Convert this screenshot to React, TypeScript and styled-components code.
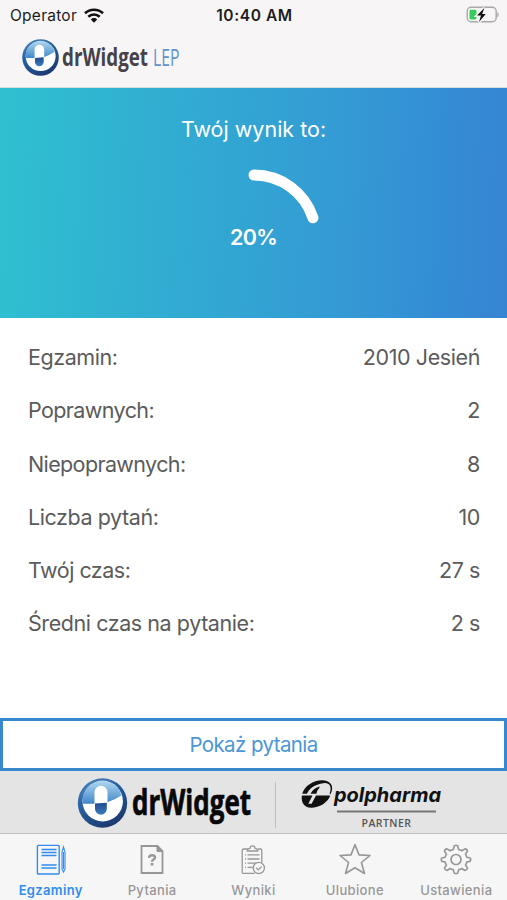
import React from "react";
import styled, { createGlobalStyle } from "styled-components";

const GlobalStyle = createGlobalStyle`
  * { box-sizing: border-box; }
  body { margin: 0; background: #fff; font-family: Inter, "Noto Sans", sans-serif; }
`;

const Screen = styled.main`
  width: 507px;
  height: 900px;
  display: flex;
  flex-direction: column;
  overflow: hidden;
  background: #fff;
`;

const Header = styled.header`
  height: 88px;
  flex: none;
  background: #f7f5f6;
  border-bottom: 1px solid #d5dde0;
`;

const StatusBar = styled.div`
  height: 30px;
  display: grid;
  grid-template-columns: 1fr auto 1fr;
  align-items: center;
  padding: 0 8px 0 10px;
  font-size: 15.5px;
  color: #1c1c1c;
`;

const Carrier = styled.div`
  display: flex;
  align-items: center;
  gap: 7px;
  letter-spacing: 0.25px;
`;

const Clock = styled.div`
  font-weight: 600;
  letter-spacing: 0.6px;
`;

const BatterySlot = styled.div`
  display: flex;
  justify-content: flex-end;
`;

const HeaderLogo = styled.div`
  padding: 5px 0 0 20px;
  svg { display: block; }
`;

const ScorePanel = styled.section`
  height: 230px;
  flex: none;
  display: flex;
  flex-direction: column;
  align-items: center;
  padding-top: 26px;
  background: linear-gradient(93deg, #2fc0d0 0%, #31add2 32%, #349bd4 66%, #348cd4 88%, #3685d2 100%);
  color: #fff;
`;

const ScoreTitle = styled.h1`
  margin: 0;
  font-size: 21.5px;
  line-height: 30px;
  font-weight: 400;
  letter-spacing: 0;
`;

const Gauge = styled.div`
  margin-top: 23px;
  display: grid;
  place-items: center;
  > * { grid-area: 1 / 1; }
`;

const GaugeValue = styled.span`
  font-size: 21.5px;
  line-height: 26px;
  font-weight: 600;
  letter-spacing: -0.7px;
`;

const Details = styled.dl`
  flex: 1;
  margin: 0;
  padding: 12.4px 27px 0 28px;
`;

const DetailRow = styled.div`
  height: 53.25px;
  display: flex;
  align-items: center;
  justify-content: space-between;
  font-size: 21.5px;
  color: #5b5b5b;
`;

const Label = styled.dt<{ $track: number }>`
  letter-spacing: ${(p) => p.$track}px;
`;

const Value = styled.dd`
  margin: 0;
  letter-spacing: -0.4px;
`;

const ShowButton = styled.button`
  height: 53px;
  flex: none;
  padding: 2px 0 0;
  border: 3px solid #3788cf;
  background: #fff;
  color: #4b96d6;
  font: 400 20.5px/1 Inter, sans-serif;
  letter-spacing: -0.6px;
`;

const Banner = styled.aside`
  height: 63px;
  flex: none;
  display: flex;
  background: #e4e4e4;
  border-bottom: 1px solid #bdbdbd;
  svg { display: block; }
`;

const TabBar = styled.nav`
  height: 66px;
  flex: none;
  display: grid;
  grid-template-columns: repeat(5, 1fr);
  background: #f7f6f7;
`;

const Tab = styled.a<{ $active?: boolean }>`
  display: flex;
  flex-direction: column;
  align-items: center;
  padding-top: 9px;
  color: ${(p) => (p.$active ? "#318cf0" : "#979797")};
  svg { display: block; }
`;

const TabLabel = styled.span<{ $active?: boolean }>`
  margin-top: 5.5px;
  font-size: 13px;
  line-height: 18px;
  font-weight: ${(p) => (p.$active ? 600 : 500)};
  letter-spacing: 0.35px;
`;

const PillEmblem = ({ id }: { id: string }) => (
  <>
    <defs>
      <linearGradient id={`${id}-rim`} x1="0" y1="0" x2="0.6" y2="1">
        <stop offset="0" stopColor="#5689bd" />
        <stop offset="0.45" stopColor="#2860a4" />
        <stop offset="1" stopColor="#1c3a70" />
      </linearGradient>
      <linearGradient id={`${id}-sky`} x1="0" y1="0" x2="0" y2="1">
        <stop offset="0" stopColor="#b2d8f0" />
        <stop offset="1" stopColor="#3f87ca" />
      </linearGradient>
      <linearGradient id={`${id}-cap`} x1="0" y1="0" x2="0" y2="1">
        <stop offset="0" stopColor="#1f4c8e" />
        <stop offset="1" stopColor="#3c7cbc" />
      </linearGradient>
    </defs>
    <circle cx="25" cy="25" r="24.7" fill={`url(#${id}-rim)`} />
    <circle cx="25.2" cy="23.2" r="20.2" fill="#fff" />
    <path d="M5.2 25.800A20 20 0 0 1 42.500 13L43.800 17.500Q37 22 30 24.200L18 25.800Z" fill={`url(#${id}-sky)`} />
    <path d="M17 26V14.300a6.500 6.500 0 0 1 13 0V25Z" fill="#fff" />
    <path d="M17.500 25.600L29.300 24.800V30.800a5.900 5.900 0 0 1-11.800 0Z" fill={`url(#${id}-cap)`} />
  </>
);

const WifiIcon = () => (
  <svg width="20" height="15" viewBox="0 0 20 15">
    <g fill="none" stroke="#111" strokeWidth="2.6">
      <path d="M1 5.3a13 13 0 0 1 18 0" />
      <path d="M4.300 8.800a8.200 8.200 0 0 1 11.400 0" />
    </g>
    <path d="M6.800 11.400a4.600 4.600 0 0 1 6.400 0L10 14.700Z" fill="#111" />
  </svg>
);

const BatteryIcon = () => (
  <svg width="33" height="18" viewBox="0 0 33 18">
    <rect x="1.200" y="1.300" width="29" height="14.500" rx="4" fill="none" stroke="#a9a9a9" strokeWidth="1.4" />
    <path d="M31.300 6.200q1.500.6 1.500 2.500t-1.500 2.500Z" fill="#a9a9a9" />
    <rect x="3.500" y="3.700" width="7" height="9.800" rx="1.400" fill="#36cb5b" />
    <path d="M18.300 2L11 9.500H15l-2 6.500L19.800 8H16.200Z" fill="#111" stroke="#f7f5f6" strokeWidth="3" paintOrder="stroke" />
  </svg>
);

const ExamIcon = () => (
  <svg width="32" height="32" viewBox="0 0 32 32" fill="none" stroke="currentColor" strokeWidth="1.400">
    <rect x="2.400" y="2.400" width="21.800" height="28.600" rx="1" />
    <path d="M6.500 6.500h15M6.500 9.500h15M6.500 12.500h15M6.500 22h15M6.500 25h15" strokeWidth="1.300" />
    <path d="M27 9l1.500-5L30 9v17l-1.500 3L27 26ZM28.500 9v17" strokeWidth="1.100" />
  </svg>
);

const QuestionIcon = () => (
  <svg width="32" height="32" viewBox="0 0 32 32" fill="none" stroke="currentColor" strokeWidth="1.800">
    <path d="M5.500 3h16l5 5V30h-21Z" />
    <path d="M21 3v5.500h5.500Z" fill="currentColor" strokeWidth="1" />
    <path d="M13 14.800q.2-2.600 3-2.600 3 0 3 2.300 0 1.100-1.500 2t-1.500 2.300" strokeWidth="2.400" />
    <path d="M14.700 20h2.700v2.500h-2.700Z" fill="currentColor" stroke="none" />
  </svg>
);

const ResultsIcon = () => (
  <svg width="32" height="32" viewBox="0 0 32 32" fill="none" stroke="currentColor" strokeWidth="1.300">
    <path d="M11 6H6.500q-1.300 0-1.300 1.300V29q0 1.300 1.300 1.300h11M21 6h2.500q1.300 0 1.300 1.300V19.500" />
    <path d="M10.300 8h10.500q0-2.400-2.700-2.600a2.600 2.600 0 0 0-5.200 0q-2.600.2-2.600 2.600Z" />
    <path d="M10.500 11.800h12M10.500 16h12M10.500 20.200h9M10.500 24.400h5M8 11.800h1M8 16h1M8 20.200h1M8 24.400h1" />
    <circle cx="21.800" cy="25" r="5.600" />
    <path d="M19 24.800l2.300 2.100 3.300-3.300" />
  </svg>
);

const StarIcon = () => (
  <svg width="34" height="32" viewBox="0 0 34 32" fill="none" stroke="currentColor" strokeWidth="1.600" strokeLinejoin="round">
    <path d="M17 1.600l4 10.300 11 .6-8.600 7 3.100 11L17 24.800l-9.500 5.700 3.100-11-8.600-7 11-.6Z" />
  </svg>
);

const GearIcon = () => (
  <svg width="32" height="32" viewBox="0 0 32 32" fill="none" stroke="currentColor" strokeWidth="1.700" strokeLinejoin="round">
    <g transform="translate(0 -.7)">
      <path d="M14.200 2.900Q16 1.600 17.800 2.900L18.700 6.600Q20.600 7 22 8L25.200 6Q27.500 6.300 27.700 8.500L25.700 11.500Q26.700 13 27 14.700L30.500 15.500Q31.500 17.200 30.500 18.900L27 19.800Q26.600 21.500 25.700 22.900L27.700 26Q27.400 28.200 25.200 28.500L22 26.500Q20.600 27.400 18.700 27.900L17.800 31.300Q16 32.400 14.200 31.300L13.300 27.900Q11.400 27.400 10 26.500L6.800 28.500Q4.600 28.200 4.300 26L6.300 22.900Q5.400 21.500 5 19.800L1.500 18.900Q.5 17.200 1.500 15.500L5 14.700Q5.300 13 6.300 11.500L4.300 8.500Q4.500 6.300 6.800 6L10 8Q11.400 7 13.300 6.600Z" transform="translate(.3 .8) scale(.98 .96)" />
      <circle cx="16" cy="17.200" r="5" />
    </g>
  </svg>
);

const details = [
  { label: "Egzamin:", value: "2010 Jesień", track: -0.42 },
  { label: "Poprawnych:", value: "2", track: -0.6 },
  { label: "Niepoprawnych:", value: "8", track: -0.62 },
  { label: "Liczba pytań:", value: "10", track: -0.42 },
  { label: "Twój czas:", value: "27 s", track: -0.5 },
  { label: "Średni czas na pytanie:", value: "2 s", track: -0.43 },
];

const tabs = [
  { label: "Egzaminy", Icon: ExamIcon, active: true },
  { label: "Pytania", Icon: QuestionIcon },
  { label: "Wyniki", Icon: ResultsIcon },
  { label: "Ulubione", Icon: StarIcon },
  { label: "Ustawienia", Icon: GearIcon },
];

export default function App() {
  return (
    <>
      <GlobalStyle />
      <Screen>
        <Header>
          <StatusBar>
            <Carrier>
              Operator
              <WifiIcon />
            </Carrier>
            <Clock>10:40 AM</Clock>
            <BatterySlot>
              <BatteryIcon />
            </BatterySlot>
          </StatusBar>
          <HeaderLogo>
            <svg width="190" height="46" viewBox="0 0 190 46">
              <g transform="translate(2 4) scale(.74)">
                <PillEmblem id="head" />
              </g>
              <text x="42" y="31" fontFamily="Open Sans" fontWeight="700" fontSize="25" fill="#454348" textLength="86" lengthAdjust="spacingAndGlyphs">drWidget</text>
              <text x="133" y="31" fontFamily="Open Sans" fontWeight="400" fontSize="23" fill="#5e93cd" textLength="26.500" lengthAdjust="spacingAndGlyphs">LEP</text>
            </svg>
          </HeaderLogo>
        </Header>
        <ScorePanel>
          <ScoreTitle>Twój wynik to:</ScoreTitle>
          <Gauge>
            <svg width="140" height="140" viewBox="-70 -70 140 140">
              <path d="M0-62A62 62 0 0 1 58.970-19.160" fill="none" stroke="#fff" strokeWidth="11" strokeLinecap="round" />
            </svg>
            <GaugeValue>20%</GaugeValue>
          </Gauge>
        </ScorePanel>
        <Details>
          {details.map((d) => (
            <DetailRow key={d.label}>
              <Label $track={d.track}>{d.label}</Label>
              <Value>{d.value}</Value>
            </DetailRow>
          ))}
        </Details>
        <ShowButton>Pokaż pytania</ShowButton>
        <Banner>
          <svg width="507" height="62" viewBox="0 0 507 62">
            <g transform="translate(77.500 7)">
              <PillEmblem id="banner" />
            </g>
            <text x="132" y="44" fontFamily="Open Sans" fontWeight="700" fontSize="35" fill="#080808" stroke="#080808" strokeWidth="0.700" textLength="119" lengthAdjust="spacingAndGlyphs">drWidget</text>
            <path d="M275.500 11v46" stroke="#bfbfbf" />
            <path d="M302.200 22.800C304.500 15 313 9.200 322 9.200C330 9.200 335 14.500 330.500 23.200L329.600 22.800C332.500 15 329 11.500 323.500 12.200C314.500 13.500 309 17.500 307 22.800Z" fill="#111" />
            <path d="M301.900 24.600H312.500L308.300 32.800H311.600L316 24.600H330.300C327.500 32 319.500 36.800 311 36.800C304 36.800 300.800 31 301.900 24.600Z" fill="#111" />
            <path d="M310.500 22.800Q313.500 16.800 319.800 15.500L319 17.500Q317.300 18.500 316.300 22.800Z" fill="#111" />
            <text x="334" y="31" fontFamily="Inter" fontStyle="italic" fontWeight="700" fontSize="20" fill="#111" textLength="107" lengthAdjust="spacingAndGlyphs">polpharma</text>
            <path d="M337 40.500H436" stroke="#777" strokeWidth="2" />
            <text x="361.500" y="55.500" fontFamily="Open Sans" fontWeight="600" fontSize="10.500" fill="#555" textLength="49.500">PARTNER</text>
          </svg>
        </Banner>
        <TabBar>
          {tabs.map(({ label, Icon, active }) => (
            <Tab key={label} $active={active}>
              <Icon />
              <TabLabel $active={active}>{label}</TabLabel>
            </Tab>
          ))}
        </TabBar>
      </Screen>
    </>
  );
}
